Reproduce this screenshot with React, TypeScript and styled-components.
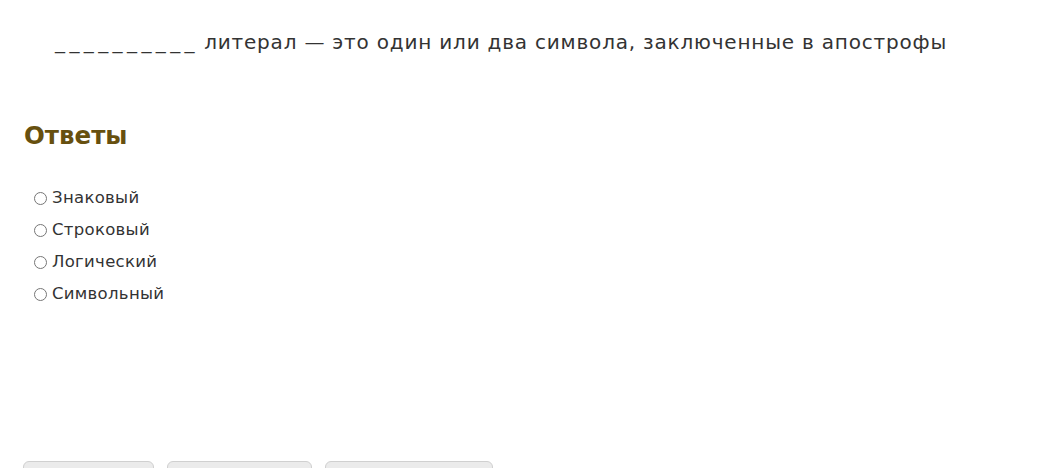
import React from "react";
import styled, { createGlobalStyle } from "styled-components";

const GlobalStyle = createGlobalStyle`
  html, body {
    margin: 0;
    height: 100%;
    overflow: hidden;
    background: #fff;
    font-family: "DejaVu Sans", "Noto Sans", sans-serif;
    color: #333;
  }
`;

const Page = styled.div`
  padding: 0 24px;
  display: flex;
  flex-direction: column;
`;

const Question = styled.p`
  margin: 26px 0 0 31px;
  font-size: 20px;
  line-height: 32px;
  letter-spacing: 0.8px;
  color: #333;
`;

const Blank = styled.span`
  letter-spacing: 4.4px;
  margin-right: -2px;
`;

const Heading = styled.h2`
  margin: 63px 0 0;
  font-size: 24.5px;
  line-height: 30px;
  font-weight: 700;
  color: #67500f;
`;

const Options = styled.div`
  display: flex;
  flex-direction: column;
  margin: 30px 0 0 9px;
`;

const Option = styled.label`
  display: flex;
  align-items: center;
  height: 32px;
  font-size: 16.5px;
  letter-spacing: 0.3px;
  color: #333;
`;

const Radio = styled.input.attrs({ type: "radio" })`
  width: 13px;
  height: 13px;
  margin: 3px 5px 0 1px;
`;

const Actions = styled.div`
  display: flex;
  gap: 13px;
  margin: 152px 0 0 -1px;
`;

const Button = styled.button<{ $w: number }>`
  width: ${({ $w }) => $w}px;
  height: 36px;
  background: #ebebeb;
  border: 1px solid #d0d0d0;
  border-radius: 6px;
`;

const answers = ["Знаковый", "Строковый", "Логический", "Символьный"];

export default function App() {
  return (
    <>
      <GlobalStyle />
      <Page>
        <Question>
          <Blank>__________</Blank> литерал — это один или два символа, заключенные в апострофы
        </Question>
        <Heading>Ответы</Heading>
        <Options>
          {answers.map((a) => (
            <Option key={a}>
              <Radio name="answer" />
              {a}
            </Option>
          ))}
        </Options>
        <Actions>
          <Button $w={131} />
          <Button $w={145} />
          <Button $w={168} />
        </Actions>
      </Page>
    </>
  );
}
